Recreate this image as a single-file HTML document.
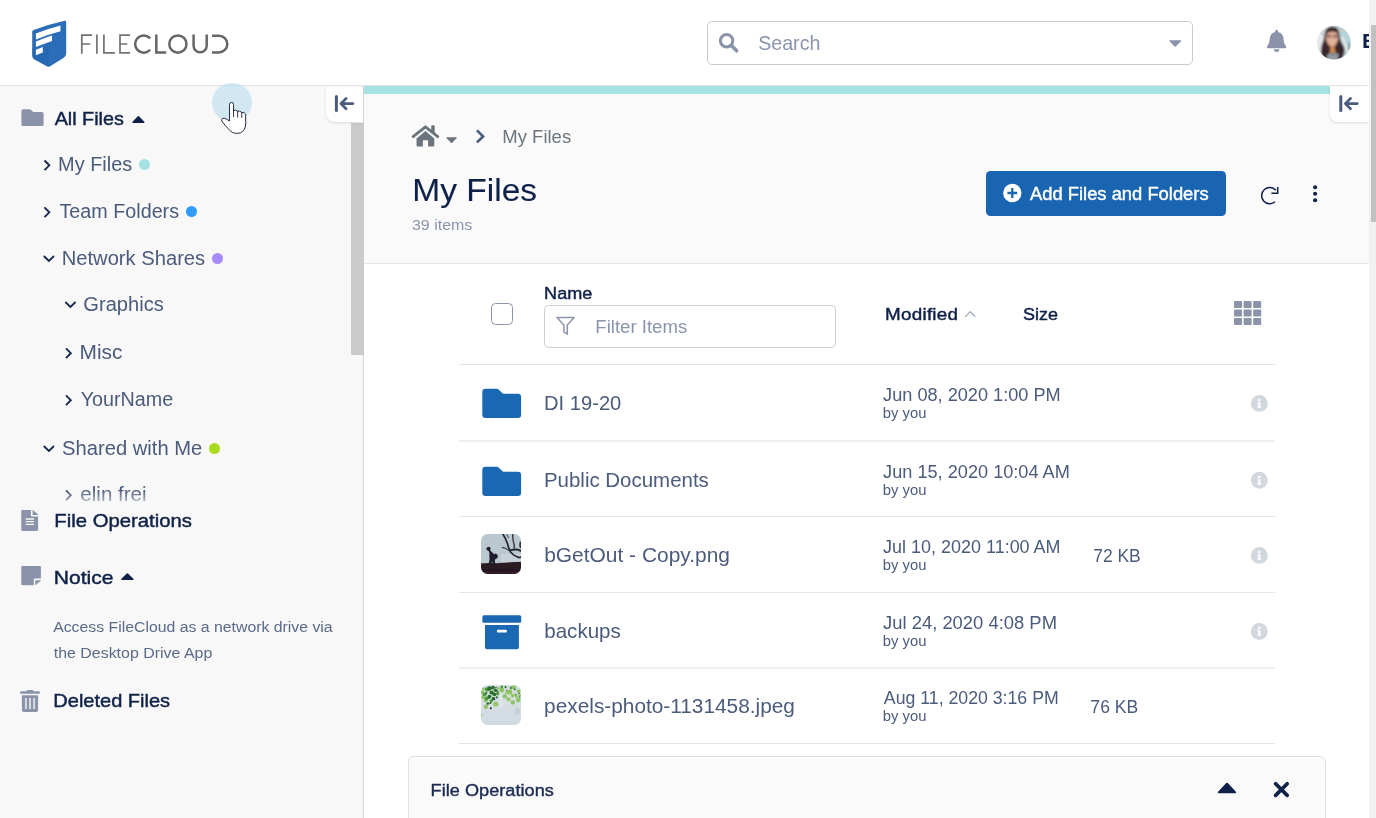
<!DOCTYPE html>
<html><head><meta charset="utf-8"><title>FileCloud</title>
<style>
*{box-sizing:border-box;margin:0;padding:0}
html,body{width:1376px;height:818px;overflow:hidden;background:#fff;font-family:"Liberation Sans",sans-serif;}
.t{position:absolute;left:0;white-space:nowrap;line-height:1;transform-origin:0 0;}
#txt{position:absolute;left:0;top:0;width:1376px;height:818px;will-change:transform;}
.a{position:absolute;}

#hdr{left:0;top:0;width:1376px;height:86px;background:#fff;border-bottom:1px solid #e3e3e3;}
#side{left:0;top:86px;width:364px;height:732px;background:#f8f8f8;border-right:1px solid #dfdfdf;box-shadow:inset -2px 0 0 -1px #f0f0f0;}
#sscroll{left:351px;top:123px;width:12.5px;height:232px;background:#cbcbcb;}
#fade{z-index:2;left:0;top:484px;width:351px;height:22px;background:linear-gradient(to bottom,rgba(248,248,248,0) 27%,rgba(248,248,248,.5) 75%,#f8f8f8 100%);}
#main{left:364px;top:86px;width:1006px;height:732px;background:#fff;}
#top{left:364px;top:94px;width:1006px;height:170px;background:#fafafa;border-bottom:1px solid #e6e6e6;}
#teal{left:364px;top:86px;width:966px;height:8px;background:#a6e1e3;}
.cbtn{background:#fff;box-shadow:0 1px 3px rgba(0,0,0,.13);}
#cb1{left:326px;top:86.5px;width:37px;height:35.5px;border-radius:0 0 0 9px;}
#cb2{left:1330.3px;top:86.5px;width:38.7px;height:35.6px;border-radius:0 0 0 8px;}
#vtrack{left:1369.2px;top:0;width:7px;height:818px;background:#f1f1f1;}
#vthumb{left:1371px;top:25px;width:5px;height:197px;background:#c1c1c1;}
#search{left:707px;top:21px;width:486px;height:44px;border:1px solid #c9cacf;border-radius:5px;background:#fff;}
#addbtn{left:986px;top:171px;width:240px;height:45px;border-radius:4.5px;background:#1a65b1;}
#chk{left:491.3px;top:302.8px;width:22.2px;height:22.2px;border:1.3px solid #8a94ad;border-radius:4.5px;background:#fff;}
#filter{left:544px;top:305px;width:292px;height:43px;border:1px solid #cfd0d4;border-radius:4.5px;background:#fff;}
.hl{left:459px;width:816px;height:1.4px;background:#e6e7e9;}
.dot{width:11px;height:11px;border-radius:50%;}
#panel{left:408px;top:756px;width:918px;height:70px;border:1px solid #e2e2e2;border-radius:5px;background:#fafafa;}
#curs{left:211.8px;top:82.6px;width:39.8px;height:39.8px;border-radius:50%;background:rgba(170,215,236,.5);}
.th{width:40.5px;height:40.5px;border-radius:7px;overflow:hidden;}
svg{position:absolute;overflow:visible;}
#t_all{top:109.98px;font-size:18.92px;letter-spacing:0.000px;font-weight:normal;color:#0f2148;transform:translateX(54.71px) scaleX(1.0435);-webkit-text-stroke:0.45px #0f2148;}
#t_my{top:155.45px;font-size:19.55px;letter-spacing:0.000px;font-weight:normal;color:#4b5b7b;transform:translateX(58.06px) scaleX(1.0197);}
#t_team{top:202.45px;font-size:19.55px;letter-spacing:0.000px;font-weight:normal;color:#4b5b7b;transform:translateX(59.48px) scaleX(1.0107);}
#t_net{top:249.45px;font-size:19.55px;letter-spacing:0.000px;font-weight:normal;color:#4b5b7b;transform:translateX(61.70px) scaleX(1.0326);}
#t_gfx{top:295.45px;font-size:19.55px;letter-spacing:0.000px;font-weight:normal;color:#4b5b7b;transform:translateX(83.32px) scaleX(1.0303);}
#t_misc{top:343.45px;font-size:19.55px;letter-spacing:0.000px;font-weight:normal;color:#4b5b7b;transform:translateX(79.55px) scaleX(1.0692);}
#t_your{top:390.45px;font-size:19.55px;letter-spacing:0.000px;font-weight:normal;color:#4b5b7b;transform:translateX(80.65px) scaleX(1.0111);}
#t_shared{top:439.45px;font-size:19.55px;letter-spacing:0.000px;font-weight:normal;color:#4b5b7b;transform:translateX(62.10px) scaleX(1.0325);}
#t_elin{top:485.45px;font-size:19.55px;letter-spacing:0.000px;font-weight:normal;color:#4b5b7b;transform:translateX(80.37px) scaleX(1.0515);}
#t_fops{top:512.04px;font-size:18.85px;letter-spacing:0.000px;font-weight:normal;color:#0f2148;transform:translateX(54.36px) scaleX(1.0769);-webkit-text-stroke:0.45px #0f2148;}
#t_notice{top:569.04px;font-size:18.85px;letter-spacing:0.000px;font-weight:normal;color:#0f2148;transform:translateX(53.80px) scaleX(1.1149);-webkit-text-stroke:0.45px #0f2148;}
#t_n1{top:619.11px;font-size:15.22px;letter-spacing:0.000px;font-weight:normal;color:#5b6a86;transform:translateX(53.15px) scaleX(1.0390);}
#t_n2{top:645.11px;font-size:15.22px;letter-spacing:0.000px;font-weight:normal;color:#5b6a86;transform:translateX(53.74px) scaleX(1.0469);}
#t_del{top:692.04px;font-size:18.85px;letter-spacing:0.000px;font-weight:normal;color:#0f2148;transform:translateX(53.32px) scaleX(1.0622);-webkit-text-stroke:0.45px #0f2148;}
#t_search{top:33.57px;font-size:19.41px;letter-spacing:0.000px;font-weight:normal;color:#8a94ad;transform:translateX(758.14px) scaleX(1.0123);}
#t_bc{top:127.75px;font-size:18.02px;letter-spacing:0.000px;font-weight:normal;color:#6c757d;transform:translateX(502.32px) scaleX(1.0260);}
#t_title{top:173.69px;font-size:32.26px;letter-spacing:0.000px;font-weight:normal;color:#0f2148;transform:translateX(412.36px) scaleX(1.0392);-webkit-text-stroke:0.1px #0f2148;}
#t_items{top:217.23px;font-size:15.08px;letter-spacing:0.000px;font-weight:normal;color:#8a94ad;transform:translateX(411.98px) scaleX(1.0589);}
#t_add{top:186.22px;font-size:17.46px;letter-spacing:0.000px;font-weight:normal;color:#ffffff;transform:translateX(1030.01px) scaleX(1.0529);-webkit-text-stroke:0.4px #ffffff;}
#t_name{top:285.81px;font-size:16.76px;letter-spacing:0.000px;font-weight:normal;color:#0f2148;transform:translateX(544.10px) scaleX(1.0769);-webkit-text-stroke:0.45px #0f2148;}
#t_filter{top:319.10px;font-size:17.60px;letter-spacing:0.000px;font-weight:normal;color:#8a94ad;transform:translateX(595.33px) scaleX(1.0556);}
#t_mod{top:306.87px;font-size:16.69px;letter-spacing:0.202px;font-weight:normal;color:#0f2148;transform:translateX(885.11px) scaleX(1.1300);-webkit-text-stroke:0.45px #0f2148;}
#t_size{top:306.87px;font-size:16.69px;letter-spacing:0.000px;font-weight:normal;color:#0f2148;transform:translateX(1023.09px) scaleX(1.0763);-webkit-text-stroke:0.45px #0f2148;}
#t_r1{top:393.51px;font-size:19.48px;letter-spacing:0.000px;font-weight:normal;color:#4b5b7b;transform:translateX(544.06px) scaleX(1.0346);}
#t_r2{top:470.51px;font-size:19.48px;letter-spacing:0.000px;font-weight:normal;color:#4b5b7b;transform:translateX(543.93px) scaleX(1.0508);}
#t_r3{top:545.51px;font-size:19.48px;letter-spacing:0.000px;font-weight:normal;color:#4b5b7b;transform:translateX(544.13px) scaleX(1.0756);}
#t_r4{top:621.51px;font-size:19.48px;letter-spacing:0.000px;font-weight:normal;color:#4b5b7b;transform:translateX(544.23px) scaleX(1.0560);}
#t_r5{top:696.51px;font-size:19.48px;letter-spacing:0.000px;font-weight:normal;color:#4b5b7b;transform:translateX(544.12px) scaleX(1.0693);}
#t_d1{top:387.22px;font-size:17.46px;letter-spacing:0.000px;font-weight:normal;color:#4b5b7b;transform:translateX(883.11px) scaleX(1.0407);}
#t_b1{top:405.89px;font-size:14.30px;letter-spacing:0.000px;font-weight:normal;color:#4b5b7b;transform:translateX(882.83px) scaleX(1.0366);}
#t_d2{top:464.22px;font-size:17.46px;letter-spacing:0.000px;font-weight:normal;color:#4b5b7b;transform:translateX(883.11px) scaleX(1.0411);}
#t_b2{top:482.89px;font-size:14.30px;letter-spacing:0.000px;font-weight:normal;color:#4b5b7b;transform:translateX(882.83px) scaleX(1.0366);}
#t_d3{top:539.22px;font-size:17.46px;letter-spacing:0.000px;font-weight:normal;color:#4b5b7b;transform:translateX(883.11px) scaleX(1.0303);}
#t_b3{top:557.89px;font-size:14.30px;letter-spacing:0.000px;font-weight:normal;color:#4b5b7b;transform:translateX(882.83px) scaleX(1.0366);}
#t_s3{top:548.22px;font-size:17.46px;letter-spacing:0.000px;font-weight:normal;color:#4b5b7b;transform:translateX(1093.20px) scaleX(1.0004);}
#t_d4{top:615.22px;font-size:17.46px;letter-spacing:0.000px;font-weight:normal;color:#4b5b7b;transform:translateX(883.04px) scaleX(1.0554);}
#t_b4{top:633.89px;font-size:14.30px;letter-spacing:0.000px;font-weight:normal;color:#4b5b7b;transform:translateX(882.83px) scaleX(1.0366);}
#t_d5{top:690.22px;font-size:17.46px;letter-spacing:0.000px;font-weight:normal;color:#4b5b7b;transform:translateX(883.86px) scaleX(1.0150);}
#t_b5{top:708.89px;font-size:14.30px;letter-spacing:0.000px;font-weight:normal;color:#4b5b7b;transform:translateX(882.83px) scaleX(1.0366);}
#t_s5{top:699.22px;font-size:17.46px;letter-spacing:0.000px;font-weight:normal;color:#4b5b7b;transform:translateX(1090.35px) scaleX(1.0081);}
#t_pops{top:782.93px;font-size:16.62px;letter-spacing:0.034px;font-weight:normal;color:#1a2b52;transform:translateX(430.54px) scaleX(1.0900);-webkit-text-stroke:0.4px #1a2b52;}
#t_e{top:32.33px;font-size:19.69px;letter-spacing:0.000px;font-weight:bold;color:#0f2148;transform:translateX(1362.15px) scaleX(1.0000);-webkit-text-stroke:0.2px #0f2148;}
#t_fops,#t_notice,#t_n1,#t_n2,#t_del{z-index:3}
</style></head>
<body>
<div class="a" id="side"></div>
<div class="a" id="sscroll"></div>
<div class="a cbtn" id="cb1"></div>
<div class="a" id="main"></div>
<div class="a" id="top"></div>
<div class="a" id="teal"></div>
<div class="a" id="hdr"></div>
<div class="a cbtn" id="cb2"></div>
<div class="a" id="search"></div>
<div class="a" id="addbtn"></div>
<div class="a" id="chk"></div>
<div class="a" id="filter"></div>
<div class="a hl" style="top:364px;height:1px;background:#e3e4e6"></div>
<div class="a hl" style="top:440px;height:2px;background:#eeeff0"></div>
<div class="a hl" style="top:516px;height:1px;background:#e5e6e8"></div>
<div class="a hl" style="top:592px;height:1px;background:#e5e6e8"></div>
<div class="a hl" style="top:667px;height:2px;background:#eeeff0"></div>
<div class="a hl" style="top:743px;height:1px;background:#e3e4e6"></div>
<div class="a" id="panel"></div>
<div class="a dot" style="left:139px;top:159px;background:#a6e1e3"></div>
<div class="a dot" style="left:185.9px;top:205.9px;background:#2f9bfa"></div>
<div class="a dot" style="left:212px;top:253px;background:#a78bfa"></div>
<div class="a dot" style="left:208.9px;top:443px;background:#a9dc1f"></div>
<svg width="1376" height="818" viewBox="0 0 1376 818" style="left:0;top:0">
<!-- logo -->
<path d="M33.6 29.9 Q48 24.6 64.6 20.8 Q66.2 20.5 66.2 22 V53 Q66.2 56 63.8 57.7 L50.6 66.1 Q48.8 67.2 47 66.2 L34.6 59.4 Q32.2 58 32.2 55.2 V32 Q32.2 30.5 33.6 29.9 Z" fill="#2b6db8"/>
<path d="M32.2 48 L48.7 47 V66.9 Q47.8 66.8 47 66.2 L34.6 59.4 Q32.2 58 32.2 55.2 Z" fill="#2565ae" opacity=".55"/>
<path d="M35.9 33.5 Q48 28.8 60.5 25.6 V31.3 Q48 34.6 35.9 39.4 Z" fill="#fff"/>
<path d="M35.9 41.6 Q44 38.2 52 35.6 V40.9 Q44 43.6 35.9 47.1 Z" fill="#fff"/>
<path d="M35.9 49.7 L42.8 47 V52.6 L35.9 55.3 Z" fill="#fff"/>
<g fill="none" stroke="#727272" stroke-width="1.7" stroke-linecap="butt" stroke-linejoin="miter">
<path d="M81.8 53.7 V35.2 H92 M81.8 44 H90.2"/>
<path d="M96.9 34.4 V53.7"/>
<path d="M103.9 34.4 V52.9 H115"/>
<path d="M130.1 35.2 H120 V52.9 H130.1 M120 44 H127.4"/>
</g>
<g fill="none" stroke="#666" stroke-width="2.5" stroke-linecap="butt" stroke-linejoin="miter">
<path d="M150.2 38.4 A8.6 8.6 0 1 0 150.2 49.7"/>
<path d="M156.3 34.4 V52.5 H166.2"/>
<circle cx="177.9" cy="44.05" r="8.6"/>
<path d="M193.6 34.4 V45.8 A6.55 6.55 0 0 0 206.7 45.8 V34.4"/>
<path d="M212 35.65 H218.9 A8.4 8.4 0 0 1 218.9 52.45 H212"/>
</g>
<!-- search icon -->
<circle cx="726.6" cy="40.7" r="6.2" fill="none" stroke="#8a93aa" stroke-width="3"/>
<path d="M731.6 45.8 L736.6 50.8" stroke="#8a93aa" stroke-width="3.6" stroke-linecap="round"/>
<path d="M1169.8 40.2 H1180.6 Q1181.6 40.4 1180.9 41.3 L1175.8 46.6 Q1175.2 47.1 1174.6 46.6 L1169.5 41.3 Q1168.8 40.4 1169.8 40.2 Z" fill="#8a93aa"/>
<!-- bell -->
<path d="M1276.6 29.8 Q1278 29.8 1278 31.2 V31.9 Q1283.4 33.2 1283.6 39.5 Q1283.7 43.8 1285.7 45.8 Q1286.5 46.7 1286.2 47.5 Q1285.9 48.3 1284.9 48.3 H1268.3 Q1267.3 48.3 1267 47.5 Q1266.7 46.7 1267.5 45.8 Q1269.5 43.8 1269.6 39.5 Q1269.8 33.2 1275.2 31.9 V31.2 Q1275.2 29.8 1276.6 29.8 Z" fill="#8a93aa"/>
<path d="M1273.8 49.3 H1279.4 Q1279.2 51.9 1276.6 51.9 Q1274 51.9 1273.8 49.3 Z" fill="#8a93aa"/>
<!-- collapse buttons icons -->
<path d="M336.4 96.5 V110.5" stroke="#4a5b7c" stroke-width="3" stroke-linecap="round" fill="none"/><path d="M352.9 103.6 H341.09999999999997 M346.09999999999997 98.5 L340.9 103.6 L346.09999999999997 108.7" stroke="#4a5b7c" stroke-width="2.7" stroke-linecap="round" stroke-linejoin="round" fill="none"/>
<path d="M1340.8 96.5 V110.5" stroke="#4a5b7c" stroke-width="3" stroke-linecap="round" fill="none"/><path d="M1357.3 103.6 H1345.5 M1350.5 98.5 L1345.3 103.6 L1350.5 108.7" stroke="#4a5b7c" stroke-width="2.7" stroke-linecap="round" stroke-linejoin="round" fill="none"/>
<!-- sidebar icons -->
<path d="M23.25 109.20 H29.68 Q30.28 109.20 30.78 109.65 L33.30 112.06 H41.75 Q43.60 112.06 43.60 113.90 V124.15 Q43.60 126.00 41.75 126.00 H23.25 Q21.40 126.00 21.40 124.15 V111.05 Q21.40 109.20 23.25 109.20 Z" fill="#8a93aa"/>
<path d="M132.9 122.9 H143.9 Q145 122.7 144.3 121.8 L139 116.3 Q138.4 115.8 137.8 116.3 L132.5 121.8 Q131.8 122.7 132.9 122.9 Z" fill="#0f2148"/>
<path d="M44.5 160.50 L49.30 165.35 L44.5 170.20" fill="none" stroke="#16264d" stroke-width="1.9" stroke-linecap="butt" stroke-linejoin="miter"/>
<path d="M44.5 207.45 L49.30 212.30 L44.5 217.15" fill="none" stroke="#16264d" stroke-width="1.9" stroke-linecap="butt" stroke-linejoin="miter"/>
<path d="M44.30 256.50 L48.90 261.00 L53.50 256.50" fill="none" stroke="#16264d" stroke-width="1.8" stroke-linecap="round" stroke-linejoin="miter"/>
<path d="M65.85 302.50 L70.45 307.00 L75.05 302.50" fill="none" stroke="#16264d" stroke-width="1.8" stroke-linecap="round" stroke-linejoin="miter"/>
<path d="M66.0 348.35 L70.80 353.20 L66.0 358.05" fill="none" stroke="#16264d" stroke-width="1.9" stroke-linecap="butt" stroke-linejoin="miter"/>
<path d="M66.0 395.35 L70.80 400.20 L66.0 405.05" fill="none" stroke="#16264d" stroke-width="1.9" stroke-linecap="butt" stroke-linejoin="miter"/>
<path d="M44.30 446.50 L48.90 451.00 L53.50 446.50" fill="none" stroke="#16264d" stroke-width="1.8" stroke-linecap="round" stroke-linejoin="miter"/>
<g opacity=".8"><path d="M66.0 490.35 L70.80 495.20 L66.0 500.05" fill="none" stroke="#16264d" stroke-width="1.9" stroke-linecap="butt" stroke-linejoin="miter"/></g>
</svg>
<div id="txt">
<div class="t" id="t_all">All Files</div>
<div class="t" id="t_my">My Files</div>
<div class="t" id="t_team">Team Folders</div>
<div class="t" id="t_net">Network Shares</div>
<div class="t" id="t_gfx">Graphics</div>
<div class="t" id="t_misc">Misc</div>
<div class="t" id="t_your">YourName</div>
<div class="t" id="t_shared">Shared with Me</div>
<div class="t" id="t_elin">elin frei</div>
<div class="t" id="t_fops">File Operations</div>
<div class="t" id="t_notice">Notice</div>
<div class="t" id="t_n1">Access FileCloud as a network drive via</div>
<div class="t" id="t_n2">the Desktop Drive App</div>
<div class="t" id="t_del">Deleted Files</div>
<div class="t" id="t_search">Search</div>
<div class="t" id="t_bc">My Files</div>
<div class="t" id="t_title">My Files</div>
<div class="t" id="t_items">39 items</div>
<div class="t" id="t_add">Add Files and Folders</div>
<div class="t" id="t_name">Name</div>
<div class="t" id="t_filter">Filter Items</div>
<div class="t" id="t_mod">Modified</div>
<div class="t" id="t_size">Size</div>
<div class="t" id="t_r1">DI 19-20</div>
<div class="t" id="t_r2">Public Documents</div>
<div class="t" id="t_r3">bGetOut - Copy.png</div>
<div class="t" id="t_r4">backups</div>
<div class="t" id="t_r5">pexels-photo-1131458.jpeg</div>
<div class="t" id="t_d1">Jun 08, 2020 1:00 PM</div>
<div class="t" id="t_b1">by you</div>
<div class="t" id="t_d2">Jun 15, 2020 10:04 AM</div>
<div class="t" id="t_b2">by you</div>
<div class="t" id="t_d3">Jul 10, 2020 11:00 AM</div>
<div class="t" id="t_b3">by you</div>
<div class="t" id="t_s3">72 KB</div>
<div class="t" id="t_d4">Jul 24, 2020 4:08 PM</div>
<div class="t" id="t_b4">by you</div>
<div class="t" id="t_d5">Aug 11, 2020 3:16 PM</div>
<div class="t" id="t_b5">by you</div>
<div class="t" id="t_s5">76 KB</div>
<div class="t" id="t_pops">File Operations</div>
<div class="t" id="t_e">E</div>
<div class="a" id="fade"></div>
</div>
<svg width="1376" height="818" viewBox="0 0 1376 818" style="left:0;top:0">
<!-- file icon -->
<path d="M22.4 510 H30.9 V515.6 Q30.9 516.6 31.9 516.6 H38.1 V529.8 Q38.1 530.9 37 530.9 H22.4 Q21.3 530.9 21.3 529.8 V511.1 Q21.3 510 22.4 510 Z M32.6 510 H32.9 L38.1 514.6 V514.9 H32.6 Z" fill="#8a93aa"/>
<path d="M25.7 519 H34 M25.7 521.6 H34 M25.7 524.4 H34" stroke="#f8f8f8" stroke-width="1.3" fill="none"/>
<!-- sticky note -->
<path d="M22.5 566 H39.8 Q40.9 566 40.9 567.1 V578.6 H34.9 Q33.8 578.6 33.8 579.7 V585.2 H22.5 Q21.3 585.2 21.3 584.1 V567.1 Q21.3 566 22.5 566 Z M35.3 580.2 H40.9 V580.5 L35.6 585.2 H35.3 Z" fill="#8a93aa"/>
<path d="M121.8 579.9 H133 Q134.1 579.7 133.4 578.8 L128 573.4 Q127.4 572.9 126.8 573.4 L121.4 578.8 Q120.7 579.7 121.8 579.9 Z" fill="#0f2148"/>
<!-- trash -->
<path d="M27.4 690 H32.8 L33.8 691.2 H39 Q39.8 691.2 39.8 692 V693.8 H20.1 V692 Q20.1 691.2 20.9 691.2 H26.4 Z" fill="#8a93aa"/>
<path d="M21.9 695.2 H38.1 V710 Q38.1 711.9 36.2 711.9 H23.8 Q21.9 711.9 21.9 710 Z" fill="#8a93aa"/>
<path d="M25.9 698 V708.9 M30 698 V708.9 M34.1 698 V708.9" stroke="#d9dce3" stroke-width="2" fill="none"/>
<!-- home -->
<path d="M413.1 136.7 L425.45 126.8 L437.8 136.7" fill="none" stroke="#6c757d" stroke-width="2.8" stroke-linecap="round" stroke-linejoin="round"/>
<path d="M425.45 131 L434.3 138.5 V145.6 Q434.3 146.6 433.3 146.6 H428.1 V140.3 H422.9 V146.6 H417.5 Q416.5 146.6 416.5 145.6 V138.5 Z" fill="#6c757d"/>
<path d="M431.2 125.9 Q431.2 125.2 431.9 125.2 H434 Q434.7 125.2 434.7 125.9 V134 L431.2 131 Z" fill="#6c757d"/>
<path d="M447 137.2 H456.2 Q457.2 137.4 456.5 138.2 L452.2 142.7 Q451.6 143.2 451 142.7 L446.7 138.2 Q446 137.4 447 137.2 Z" fill="#6c757d"/>
<path d="M476.9 130.4 L483.1 136.4 L476.9 142.4" fill="none" stroke="#485a7c" stroke-width="2.6" stroke-linecap="butt" stroke-linejoin="miter"/>
<!-- plus circle -->
<circle cx="1012.3" cy="193" r="9.2" fill="#fff"/>
<path d="M1007.4 193 H1017.2 M1012.3 188.1 V197.9" stroke="#1b68b2" stroke-width="2.3" fill="none"/>
<!-- refresh -->
<path d="M1275.8 190.2 A8.1 8.1 0 1 0 1275 201.8" fill="none" stroke="#0f2148" stroke-width="1.5" stroke-linecap="butt"/>
<path d="M1277.7 187 V193.3 H1271.4" fill="none" stroke="#0f2148" stroke-width="1.5"/>
<circle cx="1315.1" cy="187.2" r="2.05" fill="#0f2148"/><circle cx="1315.1" cy="193.8" r="2.05" fill="#0f2148"/><circle cx="1315.1" cy="200.3" r="2.05" fill="#0f2148"/>
<!-- funnel -->
<path d="M557 317.4 H574.1 L567.3 324.9 V334.2 L563.8 331.8 V324.9 Z" fill="none" stroke="#8d96ad" stroke-width="1.5" stroke-linejoin="round"/>
<!-- sort caret -->
<path d="M965.8 316.3 L970.3 311.6 L974.8 316.3" fill="none" stroke="#99a1b5" stroke-width="1.2" stroke-linecap="round" stroke-linejoin="round"/>
<!-- grid -->
<g fill="#8a93aa">
<rect x="1234.0" y="300.9" width="8" height="7" rx="1"/><rect x="1243.6" y="300.9" width="8" height="7" rx="1"/><rect x="1253.2" y="300.9" width="8" height="7" rx="1"/><rect x="1234.0" y="309.4" width="8" height="7" rx="1"/><rect x="1243.6" y="309.4" width="8" height="7" rx="1"/><rect x="1253.2" y="309.4" width="8" height="7" rx="1"/><rect x="1234.0" y="317.9" width="8" height="7" rx="1"/><rect x="1243.6" y="317.9" width="8" height="7" rx="1"/><rect x="1253.2" y="317.9" width="8" height="7" rx="1"/>
</g>
<!-- row icons -->
<path d="M485.51 388.80 H497.22 Q497.82 388.80 498.32 389.25 L503.10 393.76 H517.89 Q521.10 393.76 521.10 396.98 V414.79 Q521.10 418.00 517.89 418.00 H485.51 Q482.30 418.00 482.30 414.79 V392.01 Q482.30 388.80 485.51 388.80 Z" fill="#1b68b2"/>
<path d="M485.51 466.70 H497.22 Q497.82 466.70 498.32 467.15 L503.10 471.66 H517.89 Q521.10 471.66 521.10 474.88 V492.69 Q521.10 495.90 517.89 495.90 H485.51 Q482.30 495.90 482.30 492.69 V469.91 Q482.30 466.70 485.51 466.70 Z" fill="#1b68b2"/>
<rect x="482.4" y="615.3" width="38.8" height="7.4" rx="1.5" fill="#1b68b2"/>
<path d="M485 624.9 H518.9 V647.3 Q518.9 649.2 517 649.2 H486.9 Q485 649.2 485 647.3 Z" fill="#1b68b2"/>
<rect x="496.9" y="629.7" width="10" height="2.8" rx="1.1" fill="#fff"/>
<circle cx="1259.3" cy="403.4" r="8.45" fill="#d3d7de"/><circle cx="1259.2" cy="400.09999999999997" r="1.3" fill="#fff"/><path d="M1257.3999999999999 402.29999999999995 h3 v4.1 h0.8 v1.4 h-3.9 v-1.4 h0.9 v-2.7 h-0.8 z" fill="#fff"/>
<circle cx="1259.3" cy="480.3" r="8.45" fill="#d3d7de"/><circle cx="1259.2" cy="477.0" r="1.3" fill="#fff"/><path d="M1257.3999999999999 479.2 h3 v4.1 h0.8 v1.4 h-3.9 v-1.4 h0.9 v-2.7 h-0.8 z" fill="#fff"/>
<circle cx="1259.3" cy="555.4" r="8.45" fill="#d3d7de"/><circle cx="1259.2" cy="552.1" r="1.3" fill="#fff"/><path d="M1257.3999999999999 554.3 h3 v4.1 h0.8 v1.4 h-3.9 v-1.4 h0.9 v-2.7 h-0.8 z" fill="#fff"/>
<circle cx="1259.3" cy="631.4" r="8.45" fill="#d3d7de"/><circle cx="1259.2" cy="628.1" r="1.3" fill="#fff"/><path d="M1257.3999999999999 630.3 h3 v4.1 h0.8 v1.4 h-3.9 v-1.4 h0.9 v-2.7 h-0.8 z" fill="#fff"/>
</svg>
<div class="a th" style="left:481px;top:534px;width:40.3px;height:39.9px;border-radius:6.5px"><svg width="41" height="41" viewBox="0 0 41 41" style="left:0;top:0">
<defs><filter id="b1" x="-10%" y="-10%" width="120%" height="120%"><feGaussianBlur stdDeviation=".4"/></filter></defs>
<g filter="url(#b1)">
<rect x="-2" y="-2" width="45" height="45" fill="#bac8d0"/>
<path d="M20 20 H43 V30 H20 Z" fill="#c8d1d7"/>
<path d="M-2 29.6 Q8 28.6 14 29.2 Q28 28.2 43 27.8 V43 H-2 Z" fill="#2b1d24"/>
<path d="M-2 35 H43 V43 H-2 Z" fill="#241820"/>
<path d="M3 38.6 H38" stroke="#7c3340" stroke-width=".8" stroke-dasharray="1.2 1.6" fill="none"/>
<path d="M21.3 -1 Q24.5 4 26.4 9.5 Q27.6 14.5 29.6 18.2 Q33 22 38 23.6 L42 22.6" stroke="#262630" stroke-width="1.7" fill="none" stroke-linecap="round"/>
<path d="M28.4 16.6 Q33 15.2 36.4 15.6 Q39 16.4 42 17.6" stroke="#262630" stroke-width="2" fill="none"/>
<path d="M20.8 13.4 Q24.4 13.6 28 16.6" stroke="#34343e" stroke-width="1.1" fill="none"/>
<path d="M31.8 -1 Q31.4 4 32.6 8.4 Q33.6 11.6 33.2 14.6" stroke="#3a3c46" stroke-width="1.5" fill="none"/>
<path d="M39.4 7.6 Q38.6 10.6 39.6 14" stroke="#2c2e38" stroke-width="1.6" fill="none"/>
<path d="M25.4 -1 Q26.4 2 27.6 4" stroke="#4a4c56" stroke-width="1" fill="none"/>
<circle cx="7.6" cy="14.8" r="2" fill="#1d1c26"/><path d="M7.6 15.6 L9.6 18.4" stroke="#1d1c26" stroke-width="1.8"/>
<path d="M5.4 15 L7 15.4" stroke="#1d1c26" stroke-width="1" />
<path d="M8.6 17 Q11.4 17.4 12.8 20.2 L14.4 19.4 Q16.8 20 17 22.6 Q16.6 24.8 14.4 25 L13.8 26.8 L14.6 31 L12.6 31.4 L11.2 27.6 L9.6 31.4 L7.4 31 L8.6 25.6 Q8 21 8.6 17 Z" fill="#1f1d29"/>
<path d="M18 27 v2.4" stroke="#9aa6ae" stroke-width=".9"/>
</g></svg></div>
<div class="a th" style="left:480.9px;top:685.2px;width:40.3px;height:39.9px;border-radius:6.5px"><svg width="41" height="41" viewBox="0 0 41 41" style="left:0;top:0">
<defs><filter id="b2" x="-10%" y="-10%" width="120%" height="120%"><feGaussianBlur stdDeviation=".45"/></filter></defs>
<g filter="url(#b2)">
<rect x="-2" y="-2" width="45" height="45" fill="#d6dee3"/>
<path d="M-2 24 H43 V43 H-2 Z" fill="#d2dce2"/>
<path d="M-2 36 H43 V43 H-2 Z" fill="#cfdae0"/>
<ellipse cx="36.4" cy="26" rx="2.6" ry="3.4" fill="#c6d0d6"/>
<path d="M18 6 Q20 14 19 22 L22 22 Q22 12 20.4 6 Z" fill="#dfe4e8"/>
<circle cx="1.4" cy="7" r="1.87" fill="#8cc465"/><circle cx="2" cy="12.4" r="1.70" fill="#8cc465"/><circle cx="4.6" cy="15.4" r="1.87" fill="#8cc465"/><circle cx="4.9" cy="21.7" r="2.21" fill="#8cc465"/><circle cx="14.7" cy="19.3" r="2.46" fill="#8cc465"/><circle cx="20.8" cy="5.2" r="2.38" fill="#8cc465"/><circle cx="23.8" cy="11.3" r="2.21" fill="#8cc465"/><circle cx="27.5" cy="14.4" r="2.04" fill="#8cc465"/><circle cx="31.8" cy="17.4" r="2.21" fill="#8cc465"/><circle cx="37.3" cy="15" r="2.29" fill="#8cc465"/><circle cx="28.7" cy="7" r="2.55" fill="#8cc465"/><circle cx="33" cy="2.4" r="2.04" fill="#8cc465"/><circle cx="37.6" cy="6.2" r="1.87" fill="#8cc465"/><circle cx="31.6" cy="10.8" r="1.70" fill="#8cc465"/><circle cx="35.6" cy="11.6" r="1.53" fill="#8cc465"/><circle cx="0.6" cy="30.3" r="0.85" fill="#8cc465"/><circle cx="17.4" cy="3.4" r="1.36" fill="#8cc465"/><circle cx="2.6" cy="3.8" r="1.36" fill="#8cc465"/><circle cx="25.6" cy="7.6" r="1.36" fill="#8cc465"/><circle cx="38.8" cy="10.4" r="1.19" fill="#8cc465"/><circle cx="6" cy="4.4" r="2.2" fill="#4d9a3e"/><circle cx="3.4" cy="9.4" r="2" fill="#4d9a3e"/><circle cx="16.6" cy="8.6" r="1.8" fill="#4d9a3e"/><circle cx="5.6" cy="13.6" r="2" fill="#4d9a3e"/><circle cx="10.4" cy="15.6" r="1.8" fill="#4d9a3e"/><circle cx="20.8" cy="2" r="1.4" fill="#4d9a3e"/><circle cx="30" cy="3" r="1.4" fill="#4d9a3e"/><circle cx="8.5" cy="3.5" r="2.30" fill="#286c2c"/><circle cx="12" cy="2.6" r="1.87" fill="#286c2c"/><circle cx="14.6" cy="5.2" r="1.73" fill="#286c2c"/><circle cx="10.6" cy="7.6" r="2.16" fill="#286c2c"/><circle cx="13.4" cy="9.4" r="1.87" fill="#286c2c"/><circle cx="8.4" cy="11.8" r="2.02" fill="#286c2c"/><circle cx="12.4" cy="13.4" r="1.58" fill="#286c2c"/><circle cx="15.8" cy="12.4" r="1.15" fill="#286c2c"/><circle cx="6.8" cy="18.6" r="1.37" fill="#286c2c"/><circle cx="9.4" cy="18" r="1.08" fill="#286c2c"/><circle cx="24.6" cy="2.2" r="1.08" fill="#286c2c"/><circle cx="33.8" cy="4.4" r="0.94" fill="#286c2c"/><circle cx="34.6" cy="9.6" r="0.86" fill="#286c2c"/><circle cx="38" cy="8.6" r="0.79" fill="#286c2c"/><circle cx="38.6" cy="12" r="0.72" fill="#286c2c"/><circle cx="5.4" cy="8.2" r="1.15" fill="#286c2c"/><circle cx="9.8" cy="23.2" r="1" fill="#12241a"/><circle cx="15" cy="2.4" r=".7" fill="#3a2a22"/><circle cx="16.8" cy="6.4" r=".7" fill="#1a2a1a"/><circle cx="13.4" cy="14.4" r=".8" fill="#23203a"/><circle cx="25.8" cy="5.4" r=".6" fill="#6a3a2a"/><circle cx="10.4" cy="5.4" r=".8" fill="#9fd07a"/><circle cx="7" cy="8.8" r=".8" fill="#dfe8e6"/><circle cx="12.8" cy="11.4" r=".7" fill="#cfe0d0"/><circle cx="9.6" cy="13.8" r=".7" fill="#e0e8ea"/><circle cx="14.6" cy="20" r=".8" fill="#b4dc3c"/><circle cx="28.6" cy="9.4" r=".7" fill="#b4dc3c"/><circle cx="27.4" cy="15.2" r=".7" fill="#b4dc3c"/><circle cx="33.6" cy="9.4" r=".9" fill="#b4dc3c"/>
</g></svg></div>
<svg width="1376" height="818" viewBox="0 0 1376 818" style="left:0;top:0">
<path d="M1218.6 793.2 H1235.4 Q1236.9 793 1235.9 791.8 L1227.8 783 Q1227 782.3 1226.2 783 L1218.1 791.8 Q1217.1 793 1218.6 793.2 Z" fill="#0f2148"/>
<path d="M1275.6 783.8 L1287.2 795.4 M1287.2 783.8 L1275.6 795.4" stroke="#0f2148" stroke-width="3.7" stroke-linecap="round" fill="none"/>
</svg>
<svg width="36" height="36" viewBox="-1 -1 36 36" style="left:1316.1px;top:24.6px">
<defs><clipPath id="av"><circle cx="16.95" cy="16.7" r="16.85"/></clipPath>
<filter id="bl" x="-10%" y="-10%" width="120%" height="120%"><feGaussianBlur stdDeviation=".8"/></filter></defs>
<g clip-path="url(#av)"><g filter="url(#bl)">
<rect x="-2" y="-2" width="38" height="38" fill="#cfd6da"/>
<path d="M-2 -2 H12 V36 H-2 Z" fill="#d3d8dd"/>
<path d="M1 8 Q4 6 6 12 V24 H0 Z" fill="#e6eaed"/>
<path d="M19 -2 H36 V36 H19 Z" fill="#b3d3d9"/>
<path d="M22 2 L27 3 L27 7 L23 6 Z" fill="#c9c9c2"/>
<path d="M23.5 11 L26 10.5 L33 26 L29.5 27 Z" fill="#e2eaec"/>
<path d="M31.3 17 H33.6 V25 H31.3 Z" fill="#6f8d8c"/>
<path d="M5.8 34 Q2.6 24 5.2 17.5 Q7.4 13 7.8 7 Q9.5 0.4 15.3 0.6 Q21.2 0.6 22.2 7 Q22.8 13 24.6 16.5 Q28.6 22 27.4 27 Q26 31 24 34 Z" fill="#3a262c"/>
<ellipse cx="15.1" cy="11.9" rx="6.1" ry="8.6" fill="#dcaa92"/>
<path d="M8.8 8.8 Q10 2.6 15.2 2.6 Q20.6 2.6 21.6 8.8 Q18.6 5.4 15.2 5.6 Q11.6 5.6 8.8 8.8 Z" fill="#3a262c"/>
<path d="M9.6 9.1 H14.4 V11.4 H9.6 Z M16.2 9.1 H20.8 V11.4 H16.2 Z" fill="#5d4446" opacity=".7"/><path d="M11 16.4 Q15.2 18.4 19.4 16.4" stroke="#b9806a" stroke-width=".9" fill="none"/>
<path d="M11.2 13 Q15 14 19 13 L18 17.5 Q15 20.6 12.2 17.5 Z" fill="#e3b39a"/>
<path d="M13.4 19.6 Q15.3 21.2 17.4 19.6 L18.4 27.5 H13 Z" fill="#cf8c52"/>
<path d="M8.6 35 Q9 28.4 13.2 27 L15.8 28.8 L18.4 27 Q25 27.4 27.4 35 Z" fill="#8d9aa3"/>
<path d="M5.2 20 Q8 24 10.4 33 L6 34 Q3 26 5.2 20 Z M24.6 18 Q22 25 20.8 33 L25 33 Q28.4 27 24.6 18 Z" fill="#35232a"/>
</g></g></svg>
<div class="a" id="vtrack"></div>
<div class="a" id="vthumb"></div>
<div class="a" id="curs"></div>
<svg width="1376" height="818" viewBox="0 0 1376 818" style="left:0;top:0">
<path d="M229.52 120.93 L229.52 104.67 Q229.52 102.36 231.49 102.36 Q233.54 102.36 233.54 104.67 L233.54 110.66 Q235.51 109.20 237.65 111.26 Q239.79 110.23 241.76 112.54 Q244.07 111.51 245.61 114.08 L245.78 123.92 Q245.35 130.77 240.22 132.91 Q235.94 134.19 232.52 132.48 Q229.09 130.34 222.25 121.78 Q220.54 119.64 222.42 118.53 Q224.39 117.67 226.53 119.21 Z" fill="#fff" stroke="#1c2238" stroke-width=".95" stroke-linejoin="round"/>
<path d="M233.54 110.23 L233.54 116.65 M237.65 111.26 L237.65 117.25 M241.76 112.63 L241.76 117.42" fill="none" stroke="#1c2238" stroke-width=".9" stroke-linecap="round"/>
</svg>
</body></html>
